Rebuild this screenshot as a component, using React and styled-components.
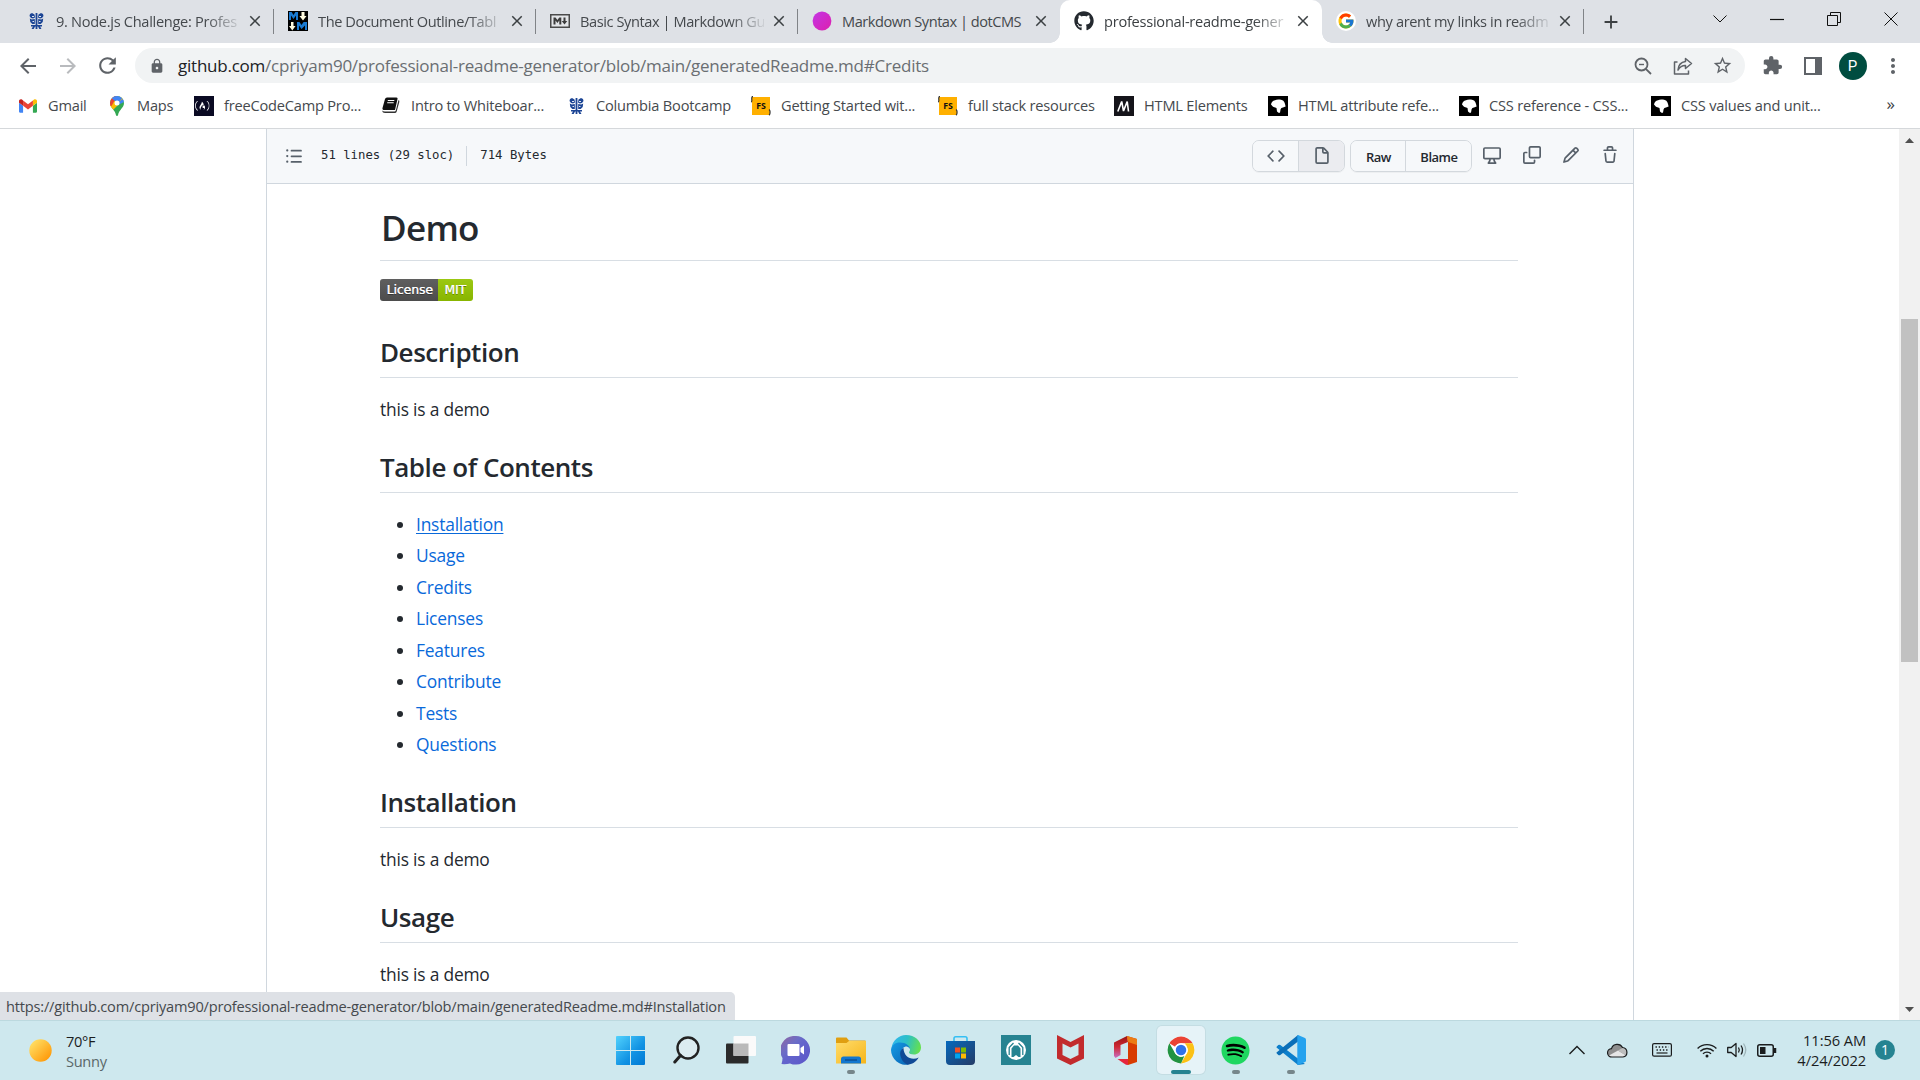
import React from "react";
import styled, { createGlobalStyle, css } from "styled-components";
import { MdArrowBack, MdArrowForward, MdRefresh, MdLock, MdStarBorder, MdExtension, MdMoreVert, MdClose, MdAdd } from "react-icons/md";
import { FcGoogle } from "react-icons/fc";
import { FaSpotify, FaFreeCodeCamp, FaGithub } from "react-icons/fa";

const ui = `"Segoe UI", "Open Sans", "Noto Sans", sans-serif`;

const Global = createGlobalStyle`
  * { box-sizing: border-box; }
  body { margin: 0; background: #fff; font-family: ${ui}; }
  svg { display: block; flex: none; }
`;

const Screen = styled.div`
  width: 1920px;
  height: 1080px;
  display: flex;
  flex-direction: column;
  overflow: hidden;
  background: #fff;
`;

/* ---------- tab strip ---------- */
const TabStrip = styled.div`
  height: 43px;
  flex: none;
  display: flex;
  padding-left: 12px;
  background: #dee1e6;
`;
const Tab = styled.div`
  position: relative;
  width: 262px;
  flex: none;
  display: flex;
  align-items: center;
  padding: 0 10px 1px 14px;
  ${(p) => p.$active && css`
    background: #fff;
    border-radius: 10px 10px 0 0;
    &::before, &::after {
      content: "";
      position: absolute;
      bottom: 0;
      width: 10px;
      height: 10px;
    }
    &::before { left: -10px; background: radial-gradient(circle at 0 0, transparent 9.5px, #fff 10px); }
    &::after { right: -10px; background: radial-gradient(circle at 100% 0, transparent 9.5px, #fff 10px); }
  `}
`;
const TabTitle = styled.div`
  flex: 1;
  min-width: 0;
  margin: 0 6px 1px 10px;
  white-space: nowrap;
  font-size: 14.6px;
  line-height: 22px;
  letter-spacing: ${(p) => p.$ls}px;
  color: ${(p) => (p.$active ? "#3c4043" : "#45494d")};
  ${(p) => p.$fade && css`mask-image: linear-gradient(90deg, #000 150px, rgba(0, 0, 0, 0.1) 184px);`}
`;
const TabDivider = styled.div`
  width: 1px;
  height: 25px;
  margin: 9px 0 0 -1px;
  background: #808387;
`;
const NewTab = styled.div`
  margin-left: 16px;
  display: flex;
  align-items: center;
  color: #3c4043;
`;
const WindowControls = styled.div`
  margin-left: auto;
  display: flex;
  height: 37px;
`;
const ControlCell = styled.div`
  width: 57.2px;
  display: flex;
  align-items: center;
  justify-content: center;
`;

/* ---------- toolbar ---------- */
const Toolbar = styled.div`
  height: 45px;
  flex: none;
  display: flex;
  align-items: center;
  padding-left: 7.5px;
`;
const ToolCell = styled.div`
  width: 40px;
  height: 36px;
  display: flex;
  align-items: center;
  justify-content: center;
  color: ${(p) => (p.$dim ? "#b9bbbe" : "#5f6368")};
`;
const AddressBar = styled.div`
  width: 1610px;
  height: 35px;
  margin: 0 7.5px;
  border-radius: 18px;
  background: #f1f3f4;
  display: flex;
  align-items: center;
  padding: 0 2.5px 0 14px;
  color: #5f6368;
`;
const Url = styled.div`
  flex: 1;
  padding-left: 13px;
  font-size: 17px;
  line-height: 26px;
  letter-spacing: -0.235px;
  color: #6a6e72;
  span { color: #202124; }
`;
const Avatar = styled.div`
  width: 28px;
  height: 28px;
  border-radius: 50%;
  background: #004d40;
  color: #fff;
  font: 15px/28px Roboto, sans-serif;
  text-align: center;
`;

/* ---------- bookmarks ---------- */
const BookmarkBar = styled.div`
  height: 41px;
  flex: none;
  display: flex;
  align-items: center;
  padding: 0 0 5px 18px;
  border-bottom: 1px solid #d5d8db;
`;
const Bookmark = styled.div`
  width: ${(p) => p.$w}px;
  flex: none;
  display: flex;
  align-items: center;
  gap: 10px;
  white-space: nowrap;
  font-size: 14.6px;
  line-height: 22px;
  letter-spacing: -0.2px;
  color: #45494d;
`;
const BookmarkLabel = styled.span`
  margin-bottom: 2px;
`;
const Overflow = styled.div`
  margin-left: auto;
  padding: 0 25px 4px 0;
  font-size: 17px;
  line-height: 20px;
  color: #3c4043;
`;
const IconBox = styled.div`
  width: 20px;
  height: 20px;
  flex: none;
  display: flex;
  align-items: center;
  justify-content: center;
`;

/* ---------- page ---------- */
const Page = styled.div`
  height: 891px;
  flex: none;
  display: flex;
  overflow: hidden;
`;
const Canvas = styled.div`
  flex: 1;
  display: flex;
  padding: 0 265px 0 266px;
`;
const FileBox = styled.div`
  width: 1368px;
  border: 1px solid #d0d7de;
  border-width: 0 1px;
`;
const FileHeader = styled.div`
  height: 55px;
  display: flex;
  align-items: center;
  justify-content: space-between;
  padding: 0 3px 0 18px;
  background: #f6f8fa;
  border-bottom: 1px solid #d0d7de;
  color: #57606a;
`;
const FileInfo = styled.div`
  display: flex;
  align-items: center;
  font: 12.3px/20px "DejaVu Sans Mono", monospace;
  color: #24292f;
`;
const InfoText = styled.span`
  margin: 0 0 3px ${(p) => p.$left || 0}px;
`;
const InfoDivider = styled.div`
  width: 1px;
  height: 20px;
  margin: 0 13px 0 12px;
  background: #d0d7de;
`;
const Actions = styled.div`
  display: flex;
  align-items: center;
  height: 100%;
`;
const ButtonGroup = styled.div`
  display: flex;
  height: 32px;
  margin: 0 ${(p) => p.$gap}px 0 0;
  border: 1px solid #d3d8dd;
  border-radius: 7px;
  overflow: hidden;
  box-shadow: 0 1px 0 rgba(27, 31, 36, 0.04);
`;
const GroupButton = styled.div`
  width: ${(p) => p.$w}px;
  display: flex;
  align-items: center;
  justify-content: center;
  padding-top: ${(p) => (p.$icon ? 0 : 2)}px;
  font: 600 13px/20px ${ui};
  letter-spacing: -0.5px;
  color: ${(p) => (p.$icon ? "#57606a" : "#24292f")};
  background: ${(p) => (p.$on ? "#ebecf0" : "#f6f8fa")};
  & + & { border-left: 1px solid #d3d8dd; }
`;
const ActionIcon = styled.div`
  width: 39.4px;
  padding-bottom: 2px;
  display: flex;
  justify-content: center;
`;
const Markdown = styled.article`
  padding: 20px 115px 0 113px;
  font-size: 17.4px;
  line-height: 27px;
  letter-spacing: -0.2px;
  color: #24292f;
`;
const H1 = styled.h1`
  margin: 0 0 18px;
  padding: 1px 0 9.8px 1px;
  border-bottom: 1px solid #d8dee4;
  font-size: 35px;
  line-height: 45px;
  font-weight: 600;
  letter-spacing: -0.7px;
`;
const H2 = styled.h2`
  margin: 27px 0 18px;
  padding-bottom: 8px;
  border-bottom: 1px solid #d8dee4;
  font-size: 26px;
  line-height: 34px;
  font-weight: 600;
  letter-spacing: -0.45px;
`;
const P = styled.p`
  margin: 0 0 18px;
`;
const BadgeRow = styled.div`
  height: 29px;
`;
const Badge = styled.div`
  display: flex;
  width: 93px;
  height: 22px;
  border-radius: 3px;
  overflow: hidden;
  color: #fff;
  font: 12.2px/22px "DejaVu Sans", sans-serif;
  letter-spacing: 0.05px;
  text-shadow: 0 1px 0 rgba(1, 1, 1, 0.35), 0.3px 0 0 #fff;
`;
const BadgePart = styled.span`
  width: ${(p) => p.$w}px;
  padding-left: ${(p) => p.$pad || 0}px;
  text-align: center;
  background: linear-gradient(rgba(187, 187, 187, 0.1), rgba(0, 0, 0, 0.1)), ${(p) => p.$bg};
`;
const List = styled.ul`
  margin: 0 0 18px;
  padding-left: 36px;
  li + li { margin-top: 4.5px; }
`;
const Link = styled.a`
  color: #0969da;
  text-decoration: ${(p) => (p.$hover ? "underline" : "none")};
  text-decoration-thickness: 1px;
  text-underline-offset: 2px;
`;
const Scrollbar = styled.div`
  width: 21px;
  display: flex;
  flex-direction: column;
  align-items: center;
  justify-content: space-between;
  padding: 9px 0 8px;
  background: #f1f1f1;
`;
const Thumb = styled.div`
  width: 17px;
  height: 343px;
  margin-bottom: 169px;
  background: #c1c1c1;
`;

const StatusBubble = styled.div`
  position: absolute;
  left: 0;
  top: 992px;
  width: 735px;
  height: 28px;
  padding-left: 6px;
  border-radius: 0 5px 0 0;
  background: #dee1e6;
  white-space: nowrap;
  font-size: 14.6px;
  line-height: 28px;
  letter-spacing: -0.195px;
  color: #45494d;
`;

/* ---------- taskbar ---------- */
const Taskbar = styled.div`
  height: 60px;
  flex: none;
  display: grid;
  grid-template-columns: 603px 715px 1fr;
  background: #cee8ee;
  border-top: 1px solid #bcd9df;
`;
const Weather = styled.div`
  display: flex;
  align-items: center;
  gap: 14px;
  padding-left: 29px;
  font-size: 14.6px;
  line-height: 20px;
  letter-spacing: -0.3px;
  color: #1b1d1e;
  span { display: block; color: #5a6769; }
`;
const Apps = styled.div`
  display: flex;
  align-items: center;
  padding-bottom: 1px;
`;
const AppSlot = styled.div`
  width: 55px;
  display: flex;
  justify-content: center;
`;
const AppTile = styled.div`
  width: 48px;
  height: 48px;
  display: flex;
  flex-direction: column;
  align-items: center;
  justify-content: flex-end;
  border-radius: 5px;
  ${(p) => p.$active && css`background: #e6f3f8; box-shadow: 0 0 0 1px #c4dde3;`}
`;
const AppGlyph = styled.div`
  height: 30px;
  display: flex;
  align-items: center;
`;
const Indicator = styled.div`
  width: ${(p) => (p.$kind === "active" ? 20 : 8)}px;
  height: 4px;
  margin-top: 5px;
  border-radius: 2px;
  background: ${(p) => (p.$kind === "active" ? "#268391" : p.$kind ? "#76868a" : "transparent")};
`;
const Tray = styled.div`
  display: flex;
  align-items: center;
  justify-content: flex-end;
  padding: 0 25px 1px 0;
`;
const Clock = styled.div`
  width: 88px;
  margin-right: 9px;
  text-align: right;
  font-size: 14.7px;
  line-height: 20px;
  letter-spacing: -0.1px;
  color: #1b1d1e;
`;
const Count = styled.div`
  width: 20px;
  height: 20px;
  border-radius: 50%;
  background: #268391;
  color: #fff;
  font-size: 14px;
  line-height: 20px;
  text-align: center;
`;
const TrayIcon = styled.div`
  width: 22px;
  margin-right: ${(p) => p.$gap}px;
  display: flex;
  justify-content: center;
`;

/* ---------- drawings ---------- */
const octicons = {
  list: "M2 4a1 1 0 100-2 1 1 0 000 2zm3.75-1.5a.75.75 0 000 1.5h8.5a.75.75 0 000-1.5h-8.5zm0 5a.75.75 0 000 1.5h8.5a.75.75 0 000-1.5h-8.5zm0 5a.75.75 0 000 1.5h8.5a.75.75 0 000-1.5h-8.5zM3 8a1 1 0 11-2 0 1 1 0 012 0zm-1 6a1 1 0 100-2 1 1 0 000 2z",
  code: "M4.72 3.22a.75.75 0 011.06 1.06L2.06 8l3.72 3.72a.75.75 0 11-1.06 1.06L.47 8.53a.75.75 0 010-1.06l4.25-4.25zm6.56 0a.75.75 0 10-1.06 1.06L13.94 8l-3.72 3.72a.75.75 0 101.06 1.06l4.25-4.25a.75.75 0 000-1.06l-4.25-4.25z",
  file: "M3.75 1.5a.25.25 0 00-.25.25v11.5c0 .138.112.25.25.25h8.5a.25.25 0 00.25-.25V6H9.75A1.75 1.75 0 018 4.25V1.5H3.75zm5.75.56v2.19c0 .138.112.25.25.25h2.19L9.5 2.06zM2 1.75C2 .784 2.784 0 3.75 0h5.086c.464 0 .909.184 1.237.513l3.414 3.414c.329.328.513.773.513 1.237v8.086A1.75 1.75 0 0112.25 15h-8.5A1.75 1.75 0 012 13.25V1.75z",
  desktop: "M1.75 2.5h12.5a.25.25 0 01.25.25v7.5a.25.25 0 01-.25.25H1.75a.25.25 0 01-.25-.25v-7.5a.25.25 0 01.25-.25zM14.25 1H1.75A1.75 1.75 0 000 2.75v7.5C0 11.216.784 12 1.75 12h3.727c-.1 1.041-.52 1.872-1.292 2.757A.75.75 0 004.75 16h6.5a.75.75 0 00.565-1.243c-.772-.885-1.193-1.716-1.292-2.757h3.727A1.75 1.75 0 0016 10.25v-7.5A1.75 1.75 0 0014.25 1zM9.018 12H6.982a5.72 5.72 0 01-.765 2.5h3.566a5.72 5.72 0 01-.765-2.5z",
  copy: "M0 6.75C0 5.784.784 5 1.75 5h1.5a.75.75 0 010 1.5h-1.5a.25.25 0 00-.25.25v7.5c0 .138.112.25.25.25h7.5a.25.25 0 00.25-.25v-1.5a.75.75 0 011.5 0v1.5A1.75 1.75 0 019.25 16h-7.5A1.75 1.75 0 010 14.25v-7.5zM5 1.75C5 .784 5.784 0 6.75 0h7.5C15.216 0 16 .784 16 1.75v7.5A1.75 1.75 0 0114.25 11h-7.5A1.75 1.75 0 015 9.25v-7.5zm1.75-.25a.25.25 0 00-.25.25v7.5c0 .138.112.25.25.25h7.5a.25.25 0 00.25-.25v-7.5a.25.25 0 00-.25-.25h-7.5z",
  pencil: "M11.013 1.427a1.75 1.75 0 012.474 0l1.086 1.086a1.75 1.75 0 010 2.474l-8.61 8.61c-.21.21-.47.364-.756.445l-3.251.93a.75.75 0 01-.927-.928l.929-3.25a1.75 1.75 0 01.445-.758l8.61-8.61zm1.414 1.06a.25.25 0 00-.354 0L10.811 3.75l1.439 1.44 1.263-1.263a.25.25 0 000-.354l-1.086-1.086zM11.189 6.25L9.75 4.81l-6.286 6.287a.25.25 0 00-.064.108l-.558 1.953 1.953-.558a.249.249 0 00.108-.064l6.286-6.286z",
  trash: "M6.5 1.75a.25.25 0 01.25-.25h2.5a.25.25 0 01.25.25V3h-3V1.75zm4.5 0V3h2.25a.75.75 0 010 1.5H2.75a.75.75 0 010-1.5H5V1.75C5 .784 5.784 0 6.75 0h2.5C10.216 0 11 .784 11 1.75zM4.496 6.675a.75.75 0 10-1.492.15l.66 6.6A1.75 1.75 0 005.405 15h5.19c.9 0 1.652-.681 1.741-1.576l.66-6.6a.75.75 0 00-1.492-.149l-.66 6.6a.25.25 0 01-.249.225h-5.19a.25.25 0 01-.249-.225l-.66-6.6z",
};
const Octicon = ({ name }) => (
  <svg width="18" height="18" viewBox="0 0 16 16" fill="#57606a"><path fillRule="evenodd" d={octicons[name]} /></svg>
);
const Columbia = () => (
  <svg width="15" height="20" viewBox="0 0 15 18" fill="#1c4595">
    <path d="M6.6 1h1.8v16H6.600z" />
    <path d="M1 2l2-1 2.500 1.500.5 3-2 1-2-.5L.5 4zM14 2l-2-1-2.500 1.500-.5 3 2 1 2-.5L14.500 4z" />
    <path d="M.8 6.500l2 1 3-.5v5l-2.500 0-2-2zM14.200 6.500l-2 1-3-.5v5l2.500 0 2-2z" />
    <path d="M2 13h11v1.500H11l1.500 2.500h-2.200L9 14.500H6L4.700 17H2.500L4 14.500H2z" />
    <path d="M3 4h2v1H3zM10 4h2v1h-2zM3.500 9h1.500v1H3.500zM10 9h1.500v1H10z" fill="#dfe7f5" />
  </svg>
);
const MmIcon = () => (
  <svg width="20" height="20" viewBox="0 0 20 20">
    <rect width="20" height="20" fill="#000" />
    <path d="M1 9V1h2.600L5.500 4 7.400 1H10v8H8V4.500L5.500 8 3 4.500V9zM9 19v-8h2.400l2.100 3 2.100-3H19v8h-2v-4.500L13.500 18 11 14.500V19z" fill="#1a7ad1" />
    <path d="M13.500 1h3v4h2L15 9.500 11.500 5h2zM3 11h2.500v4h2L4.300 19.500 1 15h2z" fill="#fffbe0" />
  </svg>
);
const MarkdownIcon = () => (
  <svg width="20" height="14" viewBox="0 0 20 14">
    <rect x=".75" y=".75" width="18.500" height="12.500" fill="#e3e5e8" stroke="#4a4a4a" strokeWidth="1.500" />
    <path d="M3.500 10.500v-7h2l1.900 2.500 1.900-2.500h2v7h-2V6.500L7.400 9 5.500 6.500v4zM13.500 3.500h2V7h1.800l-2.800 3.500L11.700 7h1.800z" fill="#3c3c3c" />
  </svg>
);
const DotIcon = () => (
  <svg width="20" height="20" viewBox="0 0 20 20">
    <defs><linearGradient id="dot" x1="0" y1="0" x2="1" y2="1"><stop offset="0" stopColor="#c336e5" /><stop offset="1" stopColor="#dd1fae" /></linearGradient></defs>
    <circle cx="10" cy="10" r="9.400" fill="url(#dot)" />
  </svg>
);
const GoogleIcon = () => (
  <svg width="20" height="20" viewBox="0 0 20 20">
    <circle cx="10" cy="10" r="10" fill="#fff" />
    <FcGoogle x="1" y="1" size="18" />
  </svg>
);
const Gmail = () => (
  <svg width="18" height="14" viewBox="52 42 88 66">
    <path fill="#4285f4" d="M58 108h14V74L52 59v43c0 3.320 2.690 6 6 6" />
    <path fill="#34a853" d="M120 108h14c3.320 0 6-2.690 6-6V59l-20 15" />
    <path fill="#fbbc04" d="M120 48v26l20-15v-8c0-7.420-8.470-11.650-14.400-7.200" />
    <path fill="#ea4335" d="M72 74V48l24 18 24-18v26L96 92" />
    <path fill="#c5221f" d="M52 51v8l20 15V48l-5.600-4.200c-5.940-4.450-14.400-.22-14.400 7.200" />
  </svg>
);
const MapsIcon = () => (
  <svg width="14" height="20" viewBox="0 0 14 20">
    <defs><clipPath id="pin"><path d="M7 0a7 7 0 0 0-7 7c0 5 5 6.500 6 12.200.2 1 1.800 1 2 0C9 13.500 14 12 14 7a7 7 0 0 0-7-7z" /></clipPath></defs>
    <g clipPath="url(#pin)">
      <rect width="14" height="20" fill="#34a853" />
      <path d="M0 14V8.500L10 0h4v3L2 15z" fill="#fbbc04" />
      <path d="M0 0h7L1.500 10H0z" fill="#ea4335" />
      <path d="M3 0h11L9 6 5 5 2 2.500z" fill="#4285f4" />
      <path d="M14 2v4L8 9 6 8z" fill="#4285f4" />
    </g>
    <circle cx="7" cy="7" r="2.500" fill="#fff" />
  </svg>
);
const Fcc = () => (
  <svg width="20" height="20" viewBox="0 0 20 20">
    <rect width="20" height="20" fill="#0a0a23" />
    <FaFreeCodeCamp x="1" y="2.500" width="18" height="15" color="#fff" />
  </svg>
);
const Book = () => (
  <svg width="18" height="17" viewBox="0 0 18 17">
    <path d="M5 .5h9.500q1.500 0 1 1.500L13 13H2.500Q0 13 .5 11L3 2Q3.500.5 5 .5z" fill="#111" />
    <path d="M16.500 3q1.200.5.8 2l-2.600 9.500q-.4 1.500-2 1.500H3Q.5 16 0 13.500q1.200 1 3 1h9.500q1 0 1.300-1z" fill="#333" />
    <path d="M5.800 3.500h6.500M5.200 5.800h6.500" stroke="#fff" strokeWidth="1.100" />
  </svg>
);
const FsText = styled.text`
  font: 700 8.8px "Open Sans", sans-serif;
`;
const Fs = () => (
  <svg width="20" height="20" viewBox="0 0 20 20">
    <rect x="1" y="1" width="18" height="18" fill="#ffb000" />
    <path d="M2 .5Q.5.5.8 3.500 1 6 0 6M18 13.500q1.300 1 1 3 .2 2-1 2.700" stroke="#333" strokeWidth="1.200" fill="none" />
    <FsText x="10" y="13" textAnchor="middle" fill="#111">FS</FsText>
  </svg>
);
const MdnM = () => (
  <svg width="20" height="20" viewBox="0 0 20 20">
    <rect width="20" height="20" fill="#15141a" />
    <path d="M3.800 15.500L7.700 5.500 9.500 15 13.200 5.500 14.500 15.500" stroke="#fff" strokeWidth="1.600" strokeLinejoin="bevel" fill="none" />
  </svg>
);
const MdnDino = () => (
  <svg width="20" height="20" viewBox="0 0 20 20">
    <rect width="20" height="20" fill="#000" />
    <path d="M3 8.500Q3.500 5 7 4.300 9 3 12 3.600q4.200.4 5 4.400l.6 2.500-2.600 1q-2 .3-2.400 1.800l-.6 3.400h-1.500L9 15.500 8.500 12 5 10.800z" fill="#fff" />
  </svg>
);
const ZoomOut = () => (
  <svg width="18" height="18" viewBox="0 0 18 18" fill="none" stroke="#5f6368" strokeWidth="1.800">
    <circle cx="7.500" cy="7.500" r="6" /><path d="M11.800 11.800l5.200 5.200" /><path d="M5 7.500h5" strokeWidth="1.400" />
  </svg>
);
const Share = () => (
  <svg width="20" height="20" viewBox="0 0 20 20" fill="none" stroke="#5f6368" strokeWidth="1.500" strokeLinejoin="round">
    <path d="M4.500 6H1.500v12h14v-3.500" /><path d="M12.500 2.500l6 5-6 5v-3Q8 9.200 5 14q.5-7.500 7.500-8.500z" />
  </svg>
);
const SidePanel = () => (
  <svg width="18" height="18" viewBox="0 0 18 18"><path d="M0 0h18v18H0zM2 2v14h9V2z" fill="#5f6368" fillRule="evenodd" /></svg>
);
const Arrow = ({ up }) => (
  <svg width="9" height="5" viewBox="0 0 9 5"><path d={up ? "M4.500 0L9 5H0z" : "M4.500 5L0 0h9z"} fill="#505050" /></svg>
);

const Windows = () => (
  <svg width="29" height="29" viewBox="0 0 29 29">
    <defs><linearGradient id="win" x1="0" y1="0" x2="1" y2="1"><stop offset="0" stopColor="#52d2fd" /><stop offset=".6" stopColor="#1192e3" /><stop offset="1" stopColor="#0078d4" /></linearGradient></defs>
    <path d="M1 0h13v14H0V1q0-1 1-1zM15 0h13q1 0 1 1v13H15zM0 15h14v14H1q-1 0-1-1zM15 15h14v13q0 1-1 1H15z" fill="url(#win)" />
  </svg>
);
const Search = () => (
  <svg width="28" height="28" viewBox="0 0 28 28" fill="none" stroke="#222" strokeLinecap="round">
    <circle cx="16" cy="12" r="10.500" strokeWidth="2.400" fill="#dcecf0" /><path d="M8.500 19.500L2.800 26" strokeWidth="3" />
  </svg>
);
const TaskView = () => (
  <svg width="30" height="28" viewBox="0 0 30 28">
    <rect x="0" y="7.500" width="22.500" height="20" rx="1" fill="#2b2b2b" />
    <rect x="7.500" y="0" width="22.500" height="20" rx="1" fill="#fafafa" />
    <rect x="7.500" y="7.500" width="15" height="12.500" fill="#b9b9b9" />
  </svg>
);
const Chat = () => (
  <svg width="29" height="29" viewBox="0 0 29 29">
    <defs><linearGradient id="chat" x1="0" y1="0" x2="1" y2="1"><stop offset="0" stopColor="#93659f" /><stop offset=".35" stopColor="#6c6dc6" /><stop offset=".5" stopColor="#6364cc" /><stop offset="1" stopColor="#5b55c8" /></linearGradient></defs>
    <path d="M14.500 0a14.300 14.300 0 1 1-5.500 27.400Q5 28.500.5 28q1-3 1-6A14.300 14.300 0 0 1 14.500 0z" fill="url(#chat)" />
    <rect x="6.500" y="8" width="12" height="12" rx="1" fill="#fff" /><path d="M19.500 12l3.500-2.500v9L19.500 16z" fill="#fff" />
  </svg>
);
const Folder = () => (
  <svg width="30" height="27" viewBox="0 0 30 27">
    <defs><linearGradient id="fold" x1="0" y1="0" x2="1" y2="1"><stop offset="0" stopColor="#ffdc6b" /><stop offset="1" stopColor="#f6b51a" /></linearGradient></defs>
    <path d="M0 1.500Q0 .5 1 .5h9.500L13 3.500h16.500V10H0z" fill="#e09f11" />
    <path d="M0 6h10.500L13 4h17v22.500H0z" fill="url(#fold)" />
    <path d="M5 26.500V22q0-2.500 2.500-2.500h15Q25 19.500 25 22v4.500z" fill="#1277cf" /><path d="M9 23h12" stroke="#0b4a8c" strokeWidth="1.300" />
  </svg>
);
const Edge = () => (
  <svg width="30" height="30" viewBox="0 0 30 30">
    <defs>
      <linearGradient id="eg1" x1="0" y1=".3" x2="1" y2=".5"><stop offset="0" stopColor="#31b5ef" /><stop offset=".5" stopColor="#2cc0c6" /><stop offset="1" stopColor="#65e04f" /></linearGradient>
      <linearGradient id="eg2" x1="0" y1="0" x2="1" y2="1"><stop offset="0" stopColor="#149be4" /><stop offset="1" stopColor="#0a63b4" /></linearGradient>
    </defs>
    <path d="M.5 13A15 15 0 0 1 15 0c9 0 15 6 15 12.500C30 17 26.500 19.500 23 19.500c-3 0-5-1-5-2 0-.8 1-1.300 1-3C19 12 16.500 10 13 10 6 9 2 9.500.5 13z" fill="url(#eg1)" />
    <path d="M0 15C.5 10 4 7.500 9 7.500c6 0 10 3.500 10 6.500-1-2-3-2.500-4.500-2.500-3 1-4.500 4-4.500 7.500 0 6 5 9 8 10.500A15 15 0 0 1 0 15z" fill="url(#eg2)" />
    <path d="M12.500 13c-2.500 1.500-4 4-3 8C11 27 15.500 30 18 29.500c5-1 8-4 9.700-7-7 3.500-15-.5-15.200-9.500z" fill="#104a96" />
  </svg>
);
const Store = () => (
  <svg width="29" height="29" viewBox="0 0 29 29">
    <defs><linearGradient id="store" x1="0" y1="0" x2="1" y2="1"><stop offset="0" stopColor="#0669bd" /><stop offset="1" stopColor="#243b66" /></linearGradient></defs>
    <path d="M8 6V2.500Q8 .8 9.700.8h9.600Q21 .8 21 2.500V6" fill="none" stroke="#35bff3" strokeWidth="1.600" />
    <path d="M0 5h29v20q0 4-4 4H4q-4 0-4-4z" fill="url(#store)" />
    <path d="M9 11.500h5v5H9z" fill="#f25022" /><path d="M15 11.500h5v5h-5z" fill="#7fba00" /><path d="M9 17.500h5v5H9z" fill="#00a4ef" /><path d="M15 17.500h5v5h-5z" fill="#ffb900" />
  </svg>
);
const TealApp = () => (
  <svg width="30" height="30" viewBox="0 0 30 30">
    <rect width="30" height="30" fill="#268391" /><circle cx="15" cy="15" r="10" fill="#fff" />
    <g fill="none" stroke="#268391" strokeWidth="1.300"><path d="M8.200 20v-7.500l4.300-4.500M21.800 20v-7.500l-4.300-4.500" /></g>
    <path d="M10.500 22v-8.500l2.500-3h4l2.500 3V22h-2L15 20l-2.500 2z" fill="#268391" />
  </svg>
);
const McAfee = () => (
  <svg width="27" height="30" viewBox="0 0 27 30"><path d="M0 0l13.500 7L27 0v23.500L13.500 30 0 23.500zM5.500 8.500v11.500l8 4 8-4V8.500l-8 4z" fill="#c22b2d" fillRule="evenodd" /></svg>
);
const Office = () => (
  <svg width="23" height="29" viewBox="0 0 23 29">
    <defs><linearGradient id="off" x1="0" y1="0" x2="0" y2="1"><stop offset="0" stopColor="#9a1414" /><stop offset=".5" stopColor="#cf2a35" /><stop offset="1" stopColor="#c86fc4" /></linearGradient></defs>
    <path d="M0 6.500L13 0l1 6-7.500 3v10L1.500 22 0 20z" fill="url(#off)" />
    <path d="M13 0l10 3v23l-9 3V6z" fill="#d83b01" /><path d="M13 0l10 3v6l-9-3z" fill="#ec7c14" />
    <path d="M3.500 23H14v6q-2 0-4-1.500z" fill="#e6263c" />
  </svg>
);
const Chrome = () => (
  <svg width="28" height="28" viewBox="0 0 48 48">
    <circle cx="24" cy="24" r="23" fill="#fff" />
    <path d="M4.100 12.500A23 23 0 0 1 43.900 12.500H24a11.500 11.500 0 0 0-10 5.750z" fill="#ea4335" />
    <path d="M43.900 12.500A23 23 0 0 1 24 47l10-17.250a11.500 11.500 0 0 0 0-11.500L30.600 12.500z" fill="#fbc116" />
    <path d="M24 47A23 23 0 0 1 4.100 12.500L14 29.750A11.500 11.500 0 0 0 30 33.900z" fill="#229342" />
    <circle cx="24" cy="24" r="11.500" fill="#fff" /><circle cx="24" cy="24" r="9" fill="#2f72ea" />
  </svg>
);
const Spotify = () => (
  <svg width="29" height="29" viewBox="0 0 29 29"><circle cx="14.500" cy="14.500" r="13" fill="#000" /><FaSpotify size="29" color="#1ed760" /></svg>
);
const VsCode = () => (
  <svg width="30" height="30" viewBox="0 0 30 30">
    <path d="M.8 11.500L2.300 10q1-.7 2 0L29 29l-7 1L.8 12.800q-.8-.6 0-1.300z" fill="#0d7fcb" />
    <path d="M.8 18.500L2.300 20q1 .7 2 0L24 5l-2-5L.8 17.200q-.8.600 0 1.300z" fill="#0b6fb8" />
    <path d="M22 0l7 3q1 .5 1 1.500v21q0 1-1 1.500l-7 3q-.7 0-.7-1.500v-27Q21.300 0 22 0z" fill="#25a2ee" />
  </svg>
);
const Sun = () => (
  <svg width="23" height="23" viewBox="0 0 23 23">
    <defs><linearGradient id="sun" x1="0" y1="0" x2="1" y2="1"><stop offset="0.100" stopColor="#ffe066" /><stop offset=".85" stopColor="#ff9c0c" /></linearGradient></defs>
    <circle cx="11.500" cy="11.500" r="11.200" fill="url(#sun)" />
  </svg>
);

const stroke = { fill: "none", stroke: "#1b1d1e", strokeWidth: 1.4 };
const ChevronUp = () => (<svg width="16" height="10" viewBox="0 0 16 10" {...stroke}><path d="M.5 9L8 1.500 15.500 9" /></svg>);
const Cloud = () => (
  <svg width="21" height="15" viewBox="0 0 21 15">
    <path d="M5 14a4.200 4.200 0 0 1-.5-8.400A6 6 0 0 1 15.500 4.500 4.800 4.800 0 0 1 16 14z" fill="#8e8e8e" />
    <path d="M2 12.500L11 7.500l8 5-3 1.500H5z" fill="#e6e6e6" /><path d="M11 7.500l4.500-2.500q4 .5 4.500 4.500l-1 3z" fill="#bdbdbd" />
    <path d="M5 14a4.200 4.200 0 0 1-.5-8.400A6 6 0 0 1 15.500 4.500 4.800 4.800 0 0 1 16 14z" fill="none" stroke="#1b1d1e" strokeWidth="1.200" />
  </svg>
);
const Keyboard = () => (
  <svg width="20" height="14" viewBox="0 0 20 14" {...stroke} strokeWidth="1.200">
    <rect x=".6" y=".6" width="18.800" height="12.600" rx="1.500" /><path d="M4.500 10h11" /><path d="M3.500 4h13M4.500 7h12" strokeDasharray="1.400 1.800" strokeWidth="1.400" />
  </svg>
);
const Wifi = () => (
  <svg width="20" height="15" viewBox="0 0 20 15" {...stroke}>
    <path d="M.6 5.500a13.300 13.300 0 0 1 18.800 0M3.300 8.200a9.500 9.500 0 0 1 13.400 0M6 10.800a5.600 5.600 0 0 1 8 0" /><circle cx="10" cy="13" r="1.500" fill="#1b1d1e" stroke="none" />
  </svg>
);
const Volume = () => (
  <svg width="20" height="16" viewBox="0 0 20 16" {...stroke} strokeWidth="1.300">
    <path d="M.7 5.500h3.500L9 1.500v13L4.200 10.500H.7z" strokeLinejoin="round" /><path d="M11.500 5.500q1.600 2.500 0 5M14 3.500q3 4.500 0 9" /><path d="M16.500 1.500q4.500 6.500 0 13" stroke="#9fb5ba" />
  </svg>
);
const Battery = () => (
  <svg width="20" height="13" viewBox="0 0 20 13" {...stroke} strokeWidth="1.500">
    <rect x=".75" y=".75" width="15.500" height="11.500" rx="2" /><rect x="3" y="3" width="5.500" height="7" fill="#1b1d1e" stroke="none" /><path d="M18 4v5" strokeWidth="2.500" />
  </svg>
);

const ctl = { width: 14, height: 14, viewBox: "0 0 14 14", fill: "none", stroke: "#111", strokeWidth: 1 };

/* ---------- data ---------- */
const tabs = [
  { icon: <Columbia />, title: "9. Node.js Challenge: Profes", ls: -0.3, fade: true },
  { icon: <MmIcon />, title: "The Document Outline/Tabl", ls: -0.4, fade: true },
  { icon: <MarkdownIcon />, title: "Basic Syntax | Markdown Gu", ls: -0.42, fade: true },
  { icon: <DotIcon />, title: "Markdown Syntax | dotCMS", ls: -0.48 },
  { icon: <FaGithub size={20} color="#24292f" />, title: "professional-readme-gener", ls: -0.25, active: true, fade: true },
  { icon: <GoogleIcon />, title: "why arent my links in readm", ls: -0.36, fade: true },
];
const bookmarks = [
  [<Gmail />, "Gmail", 89],
  [<MapsIcon />, "Maps", 87],
  [<Fcc />, "freeCodeCamp Pro...", 187],
  [<Book />, "Intro to Whiteboar...", 185],
  [<Columbia />, "Columbia Bootcamp", 185],
  [<Fs />, "Getting Started wit...", 187],
  [<Fs />, "full stack resources", 176],
  [<MdnM />, "HTML Elements", 154],
  [<MdnDino />, "HTML attribute refe...", 191],
  [<MdnDino />, "CSS reference - CSS...", 192],
  [<MdnDino />, "CSS values and unit...", 176],
];
const contents = ["Installation", "Usage", "Credits", "Licenses", "Features", "Contribute", "Tests", "Questions"];
const apps = [
  [<Windows />], [<Search />], [<TaskView />], [<Chat />], [<Folder />, "open"], [<Edge />], [<Store />],
  [<TealApp />], [<McAfee />], [<Office />], [<Chrome />, "active"], [<Spotify />, "open"], [<VsCode />, "open"],
];

export default function App() {
  return (
    <Screen>
      <Global />
      <TabStrip>
        {tabs.map((t, i) => (
          <React.Fragment key={i}>
            <Tab $active={t.active}>
              <IconBox>{t.icon}</IconBox>
              <TabTitle $fade={t.fade} $active={t.active} $ls={t.ls}>{t.title}</TabTitle>
              <MdClose size={18} color="#3c4043" />
            </Tab>
            {i !== 3 && i !== 4 && <TabDivider />}
          </React.Fragment>
        ))}
        <NewTab><MdAdd size={22} /></NewTab>
        <WindowControls>
          <ControlCell><svg {...ctl}><path d="M.5 3.500L7 10l6.500-6.500" /></svg></ControlCell>
          <ControlCell><svg {...ctl}><path d="M0 7.500h14" strokeWidth="1.200" /></svg></ControlCell>
          <ControlCell><svg {...ctl}><path d="M.5 3.500h10v10H.5zM3.500 3.500v-3h10v10h-3" /></svg></ControlCell>
          <ControlCell><svg {...ctl}><path d="M.5.5l13 13M13.500.5l-13 13" /></svg></ControlCell>
        </WindowControls>
      </TabStrip>

      <Toolbar>
        <ToolCell><MdArrowBack size={24} /></ToolCell>
        <ToolCell $dim><MdArrowForward size={24} /></ToolCell>
        <ToolCell><MdRefresh size={25} /></ToolCell>
        <AddressBar>
          <MdLock size={16} />
          <Url><span>github.com</span>/cpriyam90/professional-readme-generator/blob/main/generatedReadme.md#Credits</Url>
          <ToolCell><ZoomOut /></ToolCell>
          <ToolCell><Share /></ToolCell>
          <ToolCell><MdStarBorder size={21} /></ToolCell>
        </AddressBar>
        <ToolCell><MdExtension size={21} /></ToolCell>
        <ToolCell><SidePanel /></ToolCell>
        <ToolCell><Avatar>P</Avatar></ToolCell>
        <ToolCell><MdMoreVert size={24} /></ToolCell>
      </Toolbar>

      <BookmarkBar>
        {bookmarks.map(([icon, label, w], i) => (
          <Bookmark key={i} $w={w}><IconBox>{icon}</IconBox><BookmarkLabel>{label}</BookmarkLabel></Bookmark>
        ))}
        <Overflow>»</Overflow>
      </BookmarkBar>

      <Page>
        <Canvas>
          <FileBox>
            <FileHeader>
              <FileInfo>
                <Octicon name="list" />
                <InfoText $left={18}>51 lines (29 sloc)</InfoText>
                <InfoDivider />
                <InfoText>714 Bytes</InfoText>
              </FileInfo>
              <Actions>
                <ButtonGroup $gap={5}>
                  <GroupButton $w={45.5} $icon><Octicon name="code" /></GroupButton>
                  <GroupButton $w={46} $icon $on><Octicon name="file" /></GroupButton>
                </ButtonGroup>
                <ButtonGroup $gap={0}>
                  <GroupButton $w={54}>Raw</GroupButton>
                  <GroupButton $w={66}>Blame</GroupButton>
                </ButtonGroup>
                <ActionIcon><Octicon name="desktop" /></ActionIcon>
                <ActionIcon><Octicon name="copy" /></ActionIcon>
                <ActionIcon><Octicon name="pencil" /></ActionIcon>
                <ActionIcon><Octicon name="trash" /></ActionIcon>
              </Actions>
            </FileHeader>
            <Markdown>
              <H1>Demo</H1>
              <BadgeRow>
                <Badge>
                  <BadgePart $w={57.5} $pad={2} $bg="#555">License</BadgePart>
                  <BadgePart $w={35.5} $bg="#97ca00">MIT</BadgePart>
                </Badge>
              </BadgeRow>
              <H2>Description</H2>
              <P>this is a demo</P>
              <H2>Table of Contents</H2>
              <List>
                {contents.map((c, i) => <li key={c}><Link $hover={i === 0}>{c}</Link></li>)}
              </List>
              <H2>Installation</H2>
              <P>this is a demo</P>
              <H2>Usage</H2>
              <P>this is a demo</P>
            </Markdown>
          </FileBox>
        </Canvas>
        <Scrollbar>
          <Arrow up />
          <Thumb />
          <Arrow />
        </Scrollbar>
      </Page>

      <Taskbar>
        <Weather><Sun /><div>70°F<span>Sunny</span></div></Weather>
        <Apps>
          {apps.map(([icon, kind], i) => (
            <AppSlot key={i}>
              <AppTile $active={kind === "active"}>
                <AppGlyph>{icon}</AppGlyph>
                <Indicator $kind={kind} />
              </AppTile>
            </AppSlot>
          ))}
        </Apps>
        <Tray>
          <TrayIcon $gap={18}><ChevronUp /></TrayIcon>
          <TrayIcon $gap={23}><Cloud /></TrayIcon>
          <TrayIcon $gap={23}><Keyboard /></TrayIcon>
          <TrayIcon $gap={8}><Wifi /></TrayIcon>
          <TrayIcon $gap={8}><Volume /></TrayIcon>
          <TrayIcon $gap={0}><Battery /></TrayIcon>
          <Clock>11:56 AM<br />4/24/2022</Clock>
          <Count>1</Count>
        </Tray>
      </Taskbar>
      <StatusBubble>https://github.com/cpriyam90/professional-readme-generator/blob/main/generatedReadme.md#Installation</StatusBubble>
    </Screen>
  );
}
